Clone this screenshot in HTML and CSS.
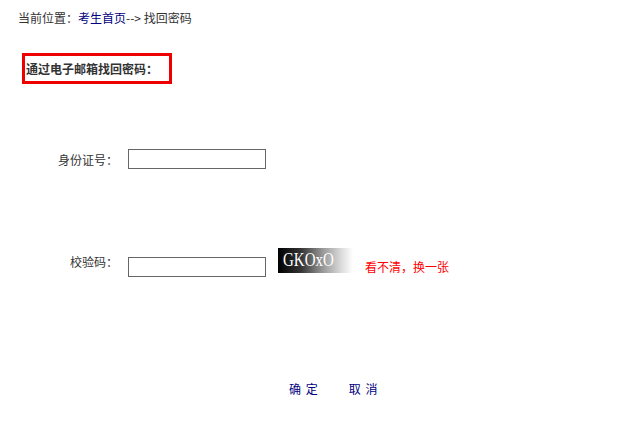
FILE: index.html
```html
<!DOCTYPE html>
<html lang="zh-CN">
<head>
<meta charset="utf-8">
<title>找回密码</title>
<link rel="stylesheet" href="styles.css">
</head>
<body>
<div class="crumb">当前位置：<a class="crumb-link" href="#">考生首页</a>--&gt; 找回密码</div>
<div class="title-box">通过电子邮箱找回密码：</div>
<div class="row row-id">
  <div class="label">身份证号：</div>
  <input class="field" type="text">
</div>
<div class="row row-code">
  <div class="label">校验码：</div>
  <input class="field" type="text">
  <div class="captcha"><span class="captcha-text">GKOxO</span></div>
  <a class="refresh" href="#">看不清，换一张</a>
</div>
<div class="actions">
  <a class="btn" href="#">确 定</a>
  <a class="btn" href="#">取 消</a>
</div>
</body>
</html>
```
FILE: styles.css
```css
html, body {
  margin: 0;
  padding: 0;
  background: #fff;
}
body {
  font-family: "Noto Sans CJK SC", "Liberation Sans", sans-serif;
  font-size: 12px;
  color: #333;
  width: 626px;
  height: 421px;
  overflow: hidden;
}
a {
  text-decoration: none;
}
.crumb {
  margin-top: 10px;
  padding-left: 18px;
  line-height: 16px;
  height: 16px;
  color: #333;
}
.crumb-link {
  color: #000080;
}
.title-box {
  margin-top: 27px;
  margin-left: 22px;
  width: 144px;
  height: 25px;
  border: 3px solid #ee0000;
  box-sizing: content-box;
  font-weight: bold;
  color: #333;
  line-height: 25px;
  text-indent: 1px;
  white-space: nowrap;
}
.row {
  display: flex;
  align-items: center;
}
.row-id {
  margin-top: 65px;
  height: 20px;
}
.row-code {
  margin-top: 79px;
  height: 29px;
}
.label {
  width: 118px;
  text-align: right;
  flex: none;
}
.field {
  margin: 0 0 0 10px;
  width: 138px;
  height: 20px;
  box-sizing: border-box;
  border: 1px solid #666;
  padding: 0 2px;
  font: inherit;
  background: #fff;
}
.row-code .label {
  align-self: flex-end;
  margin-bottom: 7px;
}
.row-code .field {
  align-self: flex-end;
}
.captcha {
  margin-left: 12px;
  width: 75px;
  height: 25px;
  align-self: flex-start;
  background: linear-gradient(to right, #000 0%, #333 30%, #999 60%, #ddd 85%, #fff 100%);
  display: flex;
  align-items: center;
}
.captcha-text {
  font-family: "Liberation Serif", "DejaVu Serif", serif;
  font-size: 15px;
  color: #fff;
  padding-left: 5px;
  line-height: 25px;
  display: inline-block;
  transform: scaleY(1.3);
}
.refresh {
  margin-left: 12px;
  color: #ff0000;
  align-self: flex-end;
  margin-bottom: 2px;
}
.actions {
  margin-top: 104px;
  display: flex;
  gap: 30px;
  padding-left: 289px;
  line-height: 16px;
}
.btn {
  color: #000080;
  letter-spacing: 1px;
}
```
